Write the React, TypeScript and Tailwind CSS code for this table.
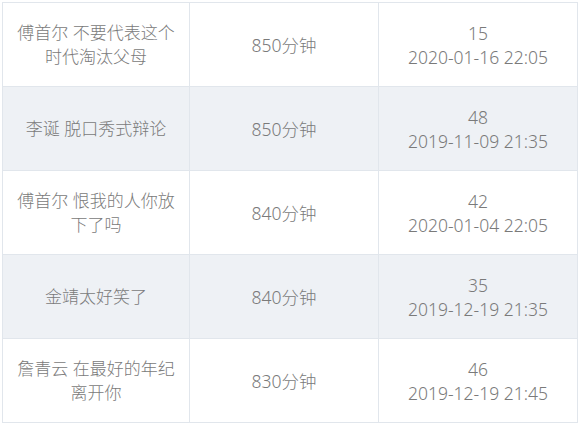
const rows = [
  { title: "傅首尔 不要代表这个时代淘汰父母", length: "850分钟", count: "15", time: "2020-01-16 22:05" },
  { title: "李诞 脱口秀式辩论", length: "850分钟", count: "48", time: "2019-11-09 21:35" },
  { title: "傅首尔 恨我的人你放下了吗", length: "840分钟", count: "42", time: "2020-01-04 22:05" },
  { title: "金靖太好笑了", length: "840分钟", count: "35", time: "2019-12-19 21:35" },
  { title: "詹青云 在最好的年纪离开你", length: "830分钟", count: "46", time: "2019-12-19 21:45" },
];

export default function App() {
  return (
    <div
      className="h-[425px] w-[580px] bg-white pl-[2px] pt-[2px]"
      style={{ fontFamily: '"Noto Sans", "Noto Sans CJK SC", sans-serif' }}
    >
      <table className="w-[576px] table-fixed border-collapse border border-[#e1e6ec] text-[17px] font-light leading-6 text-[#7a7a7a]">
        <colgroup>
          <col className="w-[187px]" />
          <col className="w-[189px]" />
          <col />
        </colgroup>
        <tbody>
          {rows.map((row, i) => (
            <tr
              key={row.time + i}
              className={i % 2 === 1 ? "h-[84px] bg-[#eef1f5]" : "h-[84px] bg-white"}
            >
              <td className="border border-[#e1e6ec] px-3 text-center align-middle">
                {row.title}
              </td>
              <td className="border border-[#e1e6ec] px-3 text-center align-middle text-[17.5px]">
                {row.length}
              </td>
              <td className="border border-[#e1e6ec] px-3 text-center align-middle text-[17.5px]">
                <div>{row.count}</div>
                <div>{row.time}</div>
              </td>
            </tr>
          ))}
        </tbody>
      </table>
    </div>
  );
}
